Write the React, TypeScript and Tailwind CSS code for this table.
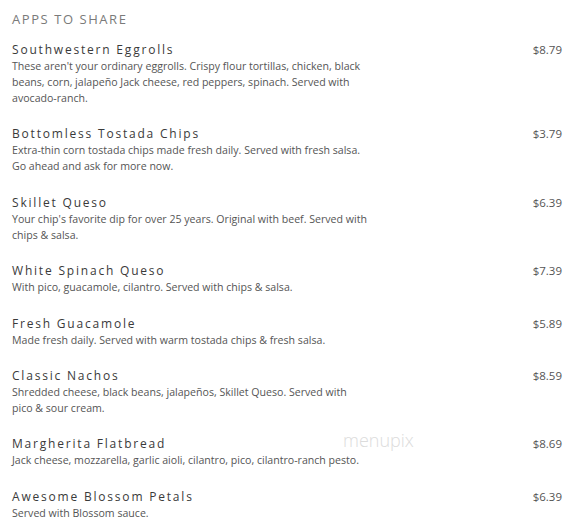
const items = [
  {
    name: "Southwestern Eggrolls",
    price: "$8.79",
    lines: [
      "These aren't your ordinary eggrolls. Crispy flour tortillas, chicken, black",
      "beans, corn, jalapeño Jack cheese, red peppers, spinach. Served with",
      "avocado-ranch.",
    ],
  },
  {
    name: "Bottomless Tostada Chips",
    price: "$3.79",
    lines: [
      "Extra-thin corn tostada chips made fresh daily. Served with fresh salsa.",
      "Go ahead and ask for more now.",
    ],
  },
  {
    name: "Skillet Queso",
    price: "$6.39",
    lines: [
      "Your chip's favorite dip for over 25 years. Original with beef. Served with",
      "chips & salsa.",
    ],
  },
  {
    name: "White Spinach Queso",
    price: "$7.39",
    lines: ["With pico, guacamole, cilantro. Served with chips & salsa."],
  },
  {
    name: "Fresh Guacamole",
    price: "$5.89",
    lines: ["Made fresh daily. Served with warm tostada chips & fresh salsa."],
  },
  {
    name: "Classic Nachos",
    price: "$8.59",
    lines: [
      "Shredded cheese, black beans, jalapeños, Skillet Queso. Served with",
      "pico & sour cream.",
    ],
  },
  {
    name: "Margherita Flatbread",
    price: "$8.69",
    lines: ["Jack cheese, mozzarella, garlic aioli, cilantro, pico, cilantro-ranch pesto."],
  },
  {
    name: "Awesome Blossom Petals",
    price: "$6.39",
    lines: ["Served with Blossom sauce."],
  },
];

export default function App() {
  return (
    <main
      className="relative w-[579px] h-[527px] overflow-hidden bg-white pl-3 pr-[17px] pt-[11px]"
      style={{ fontFamily: '"Open Sans", "Liberation Sans", sans-serif' }}
    >
      <h2 className="text-[13px] leading-4 tracking-[0.12em] text-[#7a7a7a] mb-4">APPS TO SHARE</h2>

      <div className="flex flex-col gap-[21.4px]">
        {items.map((item) => (
          <div key={item.name} className="flex justify-between">
            <div>
              <h3 className="text-[12px] leading-[14px] tracking-[0.15em] text-[#3a3a3a]">{item.name}</h3>
              <div className="text-[10.6px] leading-4 text-[#555] mt-[1px]">
                {item.lines.map((line, i) => (
                  <div key={i} className="h-4 whitespace-nowrap">
                    {line}
                  </div>
                ))}
              </div>
            </div>
            <span className="text-[11.5px] leading-[14px] text-[#555]">{item.price}</span>
          </div>
        ))}
      </div>

      {/* watermark */}
      <div className="absolute left-[343px] top-[430px] text-[18px] leading-5 font-light text-[#dcdcdc]">
        menupix
      </div>
    </main>
  );
}
